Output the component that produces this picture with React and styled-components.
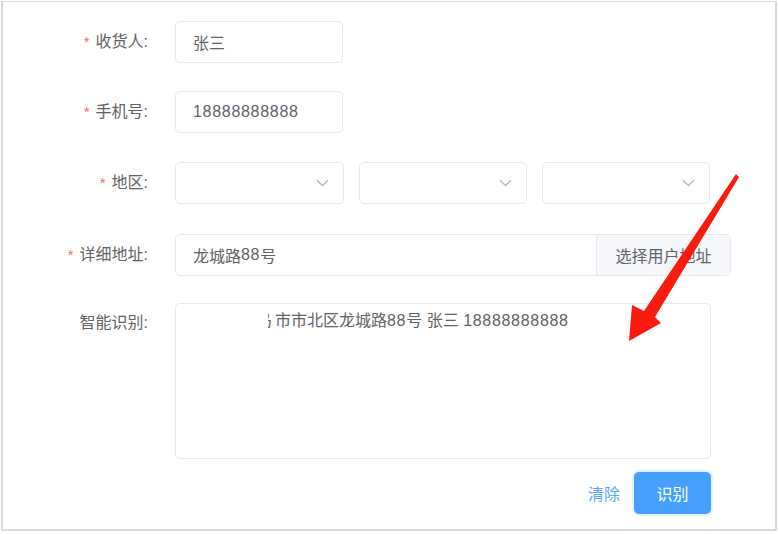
import React from 'react';
import styled, { createGlobalStyle } from 'styled-components';

const GlobalStyle = createGlobalStyle`
  html, body {
    margin: 0;
    padding: 0;
    background: #ffffff;
  }
  body {
    font-family: "Helvetica Neue", "Liberation Sans", "Noto Sans CJK SC", sans-serif;
  }
`;

const Page = styled.div`
  position: relative;
  width: 779px;
  height: 534px;
  padding: 1px;
  box-sizing: border-box;
`;

const Card = styled.div`
  box-sizing: border-box;
  width: 776px;
  height: 530px;
  border: 2px solid #d8d8d8;
  border-top-width: 1px;
  padding: 19px 0 0 0;
  background: #fff;
`;

const Row = styled.div`
  display: flex;
  align-items: ${(p) => (p.$top ? 'flex-start' : 'center')};
  margin-bottom: ${(p) => p.$gap ?? 29}px;
`;

const Label = styled.label`
  width: 145px;
  flex: none;
  text-align: right;
  padding-right: 27px;
  font-size: 16px;
  color: #606266;
  line-height: ${(p) => (p.$top ? '40px' : '42px')};
  white-space: nowrap;
`;

const Star = styled.span`
  color: #f56c6c;
  margin-right: 6px;
  font-size: 15px;
`;

const Num = styled.span`
  letter-spacing: 0.7px;
`;

const Input = styled.div`
  box-sizing: border-box;
  width: ${(p) => p.$w}px;
  height: 42px;
  border: 1px solid #e6e8ec;
  border-radius: 5px;
  padding: 0 17px;
  font-size: 16px;
  color: #606266;
  display: flex;
  align-items: center;
`;

const Selects = styled.div`
  display: flex;
  gap: 15px;
`;

const Select = styled(Input)`
  justify-content: flex-end;
  padding: 0 14px;
  color: #c0c4cc;
`;

const Group = styled.div`
  display: flex;
  width: 556px;
  height: 42px;
  box-sizing: border-box;
  border: 1px solid #e6e8ec;
  border-radius: 5px;
  overflow: hidden;
`;

const GroupInput = styled.div`
  flex: 1;
  display: flex;
  align-items: center;
  padding: 0 17px;
  font-size: 16px;
  color: #606266;
`;

const Append = styled.div`
  width: 133px;
  display: flex;
  align-items: center;
  justify-content: center;
  background: #f5f7fa;
  border-left: 1px solid #e6e8ec;
  font-size: 16px;
  color: #606266;
`;

const TextBox = styled.div`
  box-sizing: border-box;
  width: 536px;
  height: 156px;
  border: 1px solid #e6e8ec;
  border-radius: 5px;
  padding: 5px 15px 0 92px;
  font-size: 16px;
  line-height: 24px;
  color: #606266;
  white-space: nowrap;
  overflow: hidden;
`;

const Sliver = styled.span`
  display: inline-block;
  width: 4px;
  overflow: hidden;
  vertical-align: top;
  margin-right: 3px;

  span {
    display: inline-block;
    margin-left: -12px;
  }
`;

const Actions = styled.div`
  display: flex;
  justify-content: flex-end;
  align-items: center;
  width: 708px;
  gap: 14px;
  margin-top: 13px;
`;

const LinkButton = styled.button`
  border: none;
  background: none;
  padding: 0;
  font: inherit;
  font-size: 16px;
  color: #5ba8f7;
  cursor: pointer;
`;

const PrimaryButton = styled.button`
  width: 77px;
  height: 42px;
  border: none;
  border-radius: 5px;
  background: #46a0fb;
  color: #fff;
  font: inherit;
  font-size: 16px;
  box-shadow: 0 0 0 2px #e3f0fd;
  cursor: pointer;
`;

const Arrow = styled.svg`
  position: absolute;
  left: 0;
  top: 0;
  pointer-events: none;
`;

const Chevron = () => (
  <svg width="13" height="8" viewBox="0 0 13 8" fill="none">
    <path d="M1 1.2 L6.5 6.5 L12 1.2" stroke="#b4b8c0" strokeWidth="1.4" />
  </svg>
);

const App = () => {
  return (
    <>
      <GlobalStyle />
      <Page>
        <Card>
          <Row $gap={28}>
            <Label><Star>*</Star>收货人:</Label>
            <Input $w={168}>张三</Input>
          </Row>
          <Row $gap={29}>
            <Label><Star>*</Star>手机号:</Label>
            <Input $w={168}><Num>18888888888</Num></Input>
          </Row>
          <Row $gap={30}>
            <Label><Star>*</Star>地区:</Label>
            <Selects>
              <Select $w={169}><Chevron /></Select>
              <Select $w={168}><Chevron /></Select>
              <Select $w={168}><Chevron /></Select>
            </Selects>
          </Row>
          <Row $gap={27}>
            <Label><Star>*</Star>详细地址:</Label>
            <Group>
              <GroupInput>龙城路<Num>88</Num>号</GroupInput>
              <Append>选择用户地址</Append>
            </Group>
          </Row>
          <Row $top $gap={0}>
            <Label $top>智能识别:</Label>
            <TextBox>
              <Sliver><span>岛</span></Sliver>市市北区龙城路<Num>88</Num>号 张三 <Num>18888888888</Num>
            </TextBox>
          </Row>
          <Actions>
            <LinkButton>清除</LinkButton>
            <PrimaryButton>识别</PrimaryButton>
          </Actions>
        </Card>
        <Arrow width="779" height="534" viewBox="0 0 779 534">
          <polygon
            points="736,174 739,177 655,317 661,323 629,341 632,305 644,311"
            fill="#fa1a0e"
          />
        </Arrow>
      </Page>
    </>
  );
};

export default App;
